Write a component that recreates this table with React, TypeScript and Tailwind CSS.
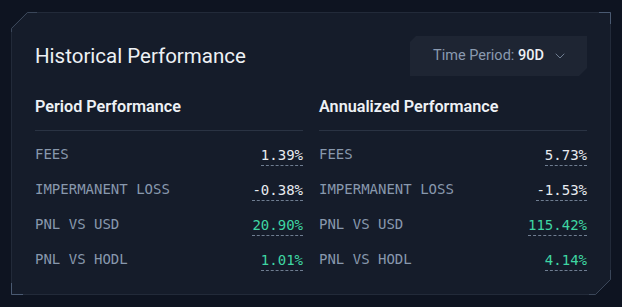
import { ChevronDown } from "lucide-react";

const periodRows = [
  { label: "FEES", value: "1.39%", positive: false },
  { label: "IMPERMANENT LOSS", value: "-0.38%", positive: false },
  { label: "PNL VS USD", value: "20.90%", positive: true },
  { label: "PNL VS HODL", value: "1.01%", positive: true },
];

const annualRows = [
  { label: "FEES", value: "5.73%", positive: false },
  { label: "IMPERMANENT LOSS", value: "-1.53%", positive: false },
  { label: "PNL VS USD", value: "115.42%", positive: true },
  { label: "PNL VS HODL", value: "4.14%", positive: true },
];

type Row = { label: string; value: string; positive: boolean };

const PerformanceColumn = ({ title, rows }: { title: string; rows: Row[] }) => (
  <div className="flex flex-col">
    <h4 className="border-b border-[#2a3343] pb-[11px] text-[16.2px] font-semibold leading-6 text-[#eef1f5]">
      {title}
    </h4>
    <div className="flex flex-col pt-[6px]">
      {rows.map((row) => (
        <div key={row.label} className="flex h-[35px] items-center justify-between font-['DejaVu_Sans_Mono',monospace] text-[14px]">
          <span className="text-[#8898ad]">{row.label}</span>
          <span
            className={`mt-[2px] border-b border-dashed border-[#6f7d91] leading-5 ${
              row.positive ? "text-[#3fd6a3]" : "text-[#e8ebf0]"
            }`}
          >
            {row.value}
          </span>
        </div>
      ))}
    </div>
  </div>
);

export default function App() {
  return (
    <div className="h-[307px] w-[622px] bg-[#0e1421] pl-[11px] pt-[12px] font-['Roboto',sans-serif]">
      <div className="relative h-[283px] w-[600px]">
        <div className="absolute inset-0 bg-[#151c2a] [clip-path:polygon(16px_0,100%_0,100%_calc(100%-16px),calc(100%-16px)_100%,0_100%,0_16px)]" />
        {/* frame */}
        <svg className="pointer-events-none absolute inset-0" width="600" height="283" aria-hidden="true">
          <path d="M0.5 16.5 L16.5 0.5 H599.5 V267.5 L584.5 282.5 H0.5 Z" fill="none" stroke="#222a39" strokeWidth="1" />
          <path d="M0.5 20 V16.5 L16.5 0.5 H26" fill="none" stroke="#3a4659" strokeWidth="1" />
          <path d="M588 0.5 H599.5 V12" fill="none" stroke="#4a5a72" strokeWidth="1" />
          <path d="M0.5 271 V282.5 H12" fill="none" stroke="#4a5a72" strokeWidth="1" />
          <path d="M599.5 258 V267.5 L584.5 282.5 H578" fill="none" stroke="#3a4659" strokeWidth="1" />
        </svg>

        <div className="relative flex flex-col px-6 pt-6">
          <div className="flex h-10 items-center justify-between">
            <h3 className="text-[20.5px] font-normal text-[#eef1f5]">Historical Performance</h3>
            <button className="flex h-10 w-[177px] items-center gap-[8px] bg-[#1e2533] pl-[23px] text-[14.5px] [clip-path:polygon(6px_0,100%_0,100%_calc(100%-8px),calc(100%-8px)_100%,0_100%,0_6px)]">
              <span className="text-[#8a9ab0]">
                Time Period: <span className="font-medium text-[#eef1f5]">90D</span>
              </span>
              <ChevronDown className="size-4 text-[#6f7d91]" strokeWidth={1.5} />
            </button>
          </div>

          <div className="mt-[19px] grid grid-cols-2 gap-4">
            <PerformanceColumn title="Period Performance" rows={periodRows} />
            <PerformanceColumn title="Annualized Performance" rows={annualRows} />
          </div>
        </div>
      </div>
    </div>
  );
}
